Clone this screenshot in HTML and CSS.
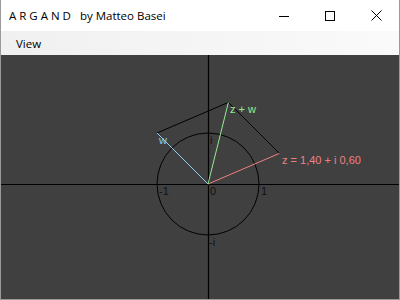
FILE: index.html
```html
<!DOCTYPE html>
<html>
<head>
<meta charset="utf-8">
<link rel="stylesheet" href="styles.css">
</head>
<body>
<div class="window">
  <header class="titlebar">
    <span class="title">A R G A N D&nbsp;&nbsp; by Matteo Basei</span>
    <div class="controls">
      <span class="ctl"><svg width="10" height="10" viewBox="0 0 10 10"><line x1="0" y1="5.5" x2="10" y2="5.5" stroke="#000" stroke-width="1"/></svg></span>
      <span class="ctl"><svg width="10" height="10" viewBox="0 0 10 10"><rect x="0.5" y="0.5" width="9" height="9" fill="none" stroke="#000" stroke-width="1"/></svg></span>
      <span class="ctl"><svg width="11" height="11" viewBox="0 0 11 11"><path d="M0.5 0.5 L10.5 10.5 M10.5 0.5 L0.5 10.5" stroke="#000" stroke-width="1"/></svg></span>
    </div>
  </header>
  <nav class="menubar"><span class="menu-item">View</span></nav>
  <main class="canvas">
    <svg class="plane" width="398" height="244" viewBox="1 55 398 244">
      <line x1="1" y1="184.5" x2="399" y2="184.5" stroke="#000" stroke-width="1.2"/>
      <line x1="208.5" y1="55" x2="208.5" y2="299" stroke="#000" stroke-width="1.2"/>
      <circle cx="208" cy="184" r="51" fill="none" stroke="#000" stroke-width="1"/>
      <line x1="157" y1="133" x2="228.4" y2="102.4" stroke="#000" stroke-width="1"/>
      <line x1="279.4" y1="153.4" x2="228.4" y2="102.4" stroke="#000" stroke-width="1"/>
      <line x1="208" y1="184" x2="279.4" y2="153.4" stroke="#f08080" stroke-width="1"/>
      <line x1="208" y1="184" x2="157" y2="133" stroke="#87cefa" stroke-width="1"/>
      <line x1="208" y1="184" x2="228.4" y2="102.4" stroke="#90ee90" stroke-width="1"/>
      <g class="axis-label">
        <text x="159" y="195">-1</text>
        <text x="210" y="195">0</text>
        <text x="261" y="195">1</text>
        <text x="210" y="144">i</text>
        <text x="209" y="246">-i</text>
      </g>
      <text class="lbl-w" x="159" y="144">w</text>
      <text class="lbl-zw" x="230" y="113">z + w</text>
      <text class="lbl-z" x="282" y="164">z = 1,40 + i 0,60</text>
    </svg>
  </main>
</div>
</body>
</html>
```
FILE: styles.css
```css
html, body {
  margin: 0;
  padding: 0;
  background: #ffffff;
}
.window {
  width: 400px;
  height: 300px;
  box-sizing: border-box;
  border: 1px solid #9a9a9a;
  border-top: none;
  display: flex;
  flex-direction: column;
  overflow: hidden;
}
.titlebar {
  height: 31px;
  flex: none;
  display: flex;
  align-items: center;
  background: #ffffff;
}
.title {
  padding-left: 8px;
  font-family: "Segoe UI", "Open Sans", "Noto Sans", sans-serif;
  font-size: 11.5px;
  color: #000;
  flex: 1;
  white-space: pre;
}
.controls {
  display: flex;
  height: 100%;
}
.ctl {
  width: 46px;
  display: flex;
  align-items: center;
  justify-content: center;
}
.ctl svg { display: block; }
.menubar {
  height: 24px;
  flex: none;
  display: flex;
  align-items: center;
  background: linear-gradient(to right, #f0f0f0, #fafafa);
}
.menu-item {
  padding-left: 15px;
  font-family: "Segoe UI", "Open Sans", "Noto Sans", sans-serif;
  font-size: 11.5px;
  color: #000;
}
.canvas {
  flex: 1;
  background: #404040;
  overflow: hidden;
}
.plane {
  display: block;
  font-family: "Liberation Sans", Arial, sans-serif;
  font-size: 11px;
}
.axis-label text { fill: #111; }
.lbl-w { fill: #87cefa; }
.lbl-zw { fill: #90ee90; }
.lbl-z { fill: #f08080; }
```
